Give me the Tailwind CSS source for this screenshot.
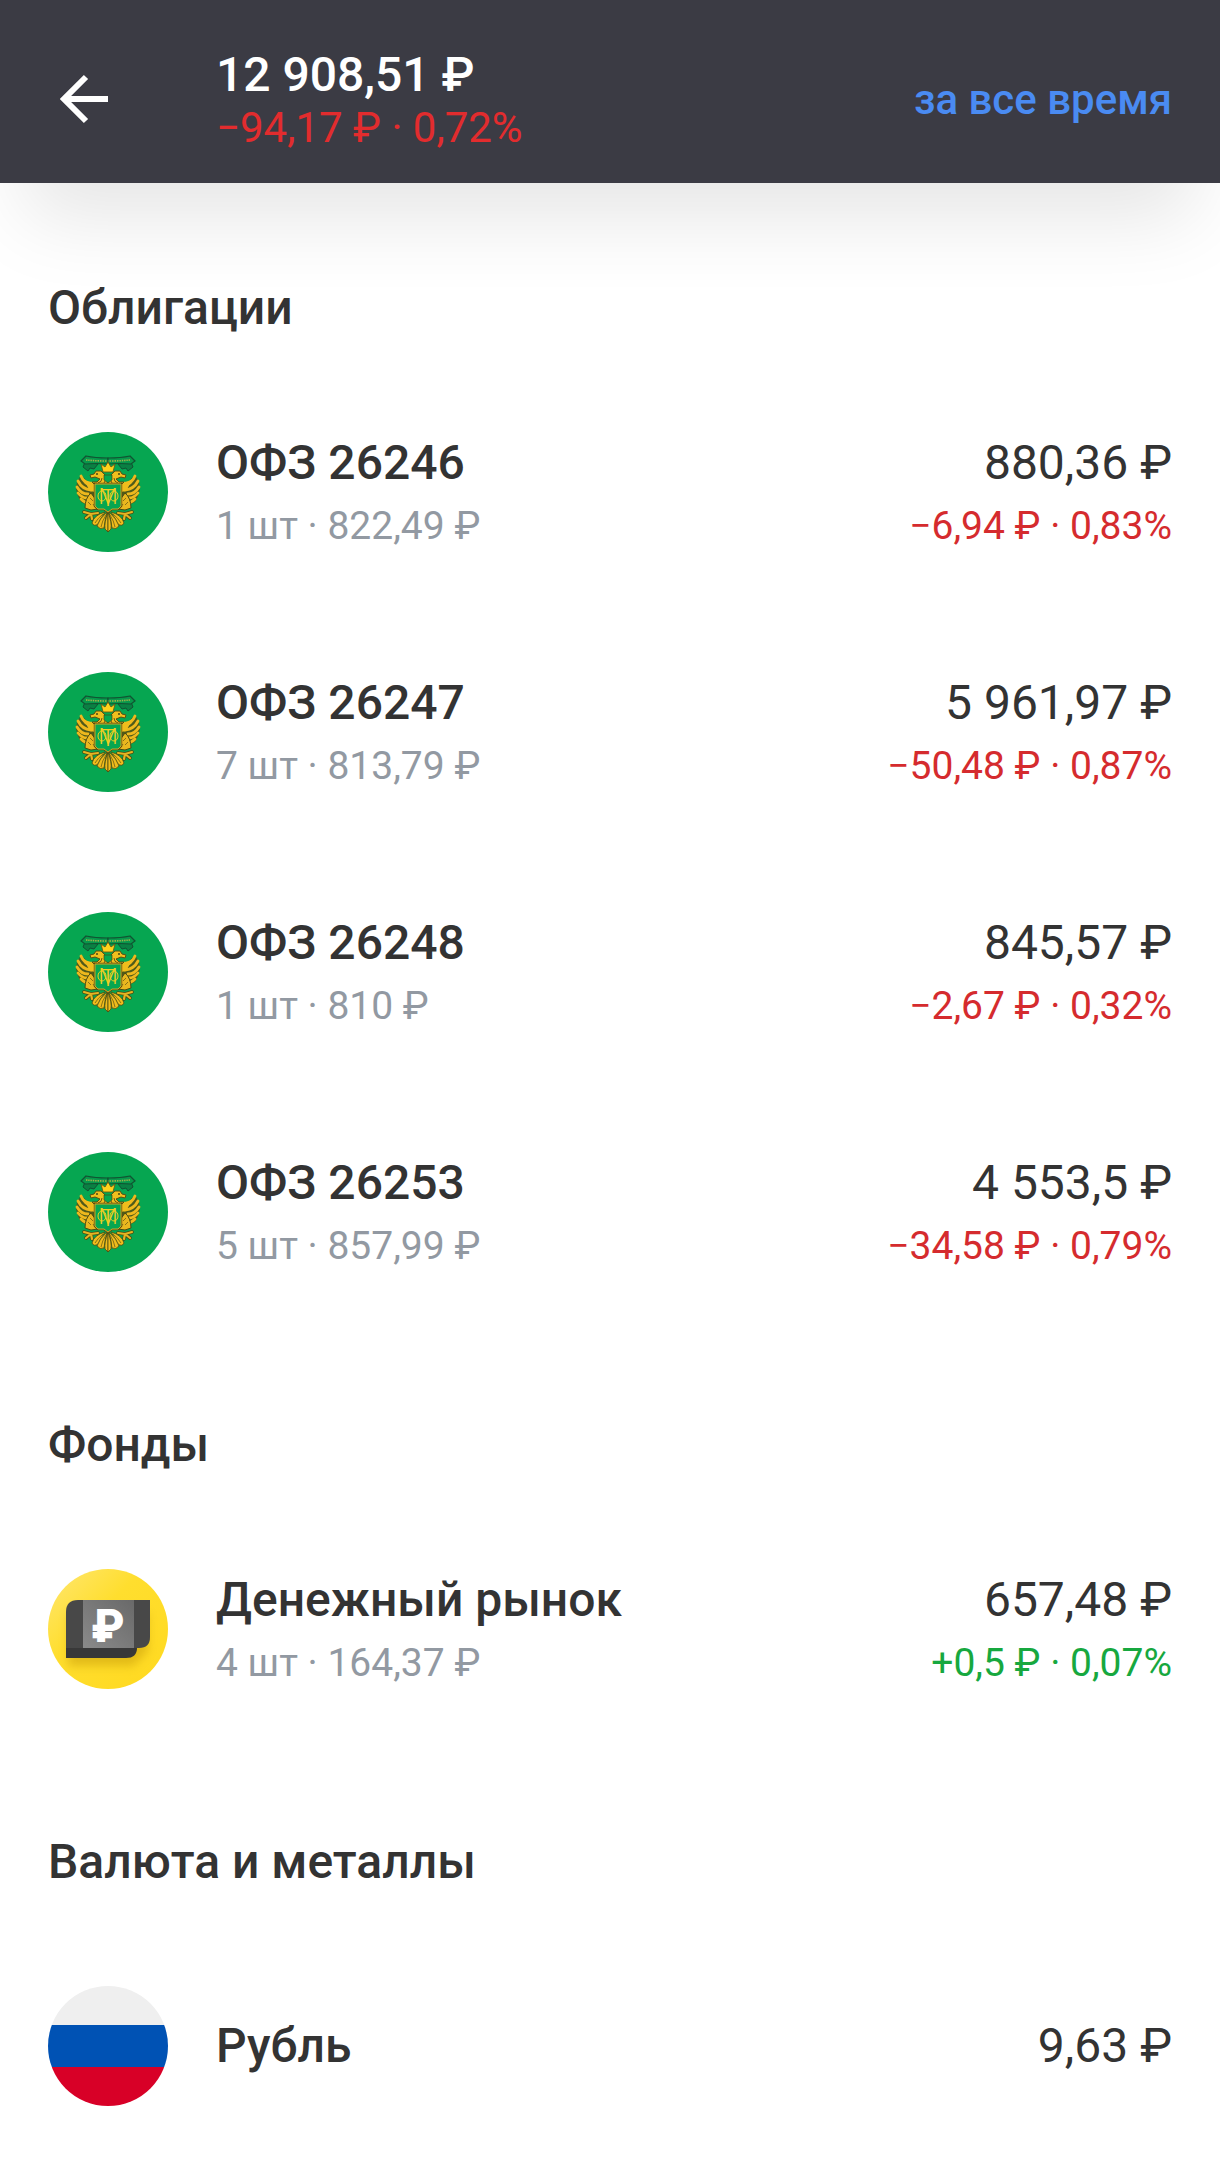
<!DOCTYPE html>
<html lang="ru">
<head>
    <meta charset="UTF-8">
    <meta name="viewport" content="width=device-width, initial-scale=1.0">
    <title>Портфель</title>
    <script src="https://cdn.jsdelivr.net/npm/@tailwindcss/browser@4"></script>
</head>
<body class="bg-white font-[Roboto,sans-serif] text-[#333333]">
    <!-- shared emblem for the government bonds -->
    <svg class="hidden" aria-hidden="true">
        <defs>
            <g id="eagle-half">
                <!-- ribbon -->
                <path d="M37 30 L35 35 L40 39 L42 36 L46 37 L50 32 Z" fill="#0a8043" stroke="#125232" stroke-width="1"/>
                <path d="M60 26 Q47 26 38 24 L33 29 L37 32 Q48 31 60 32 Z" fill="#08984b" stroke="#125232" stroke-width="1.2"/>
                <path d="M38 28 Q48 29 60 29" fill="none" stroke="#9fb14a" stroke-width="1.6" stroke-dasharray="1.5 .9"/>
                <!-- wing -->
                <path d="M33 43 L29 50 L28 57 L30 64 L33 70 L37 72 L48 74 L48 54 L40 50 Z" fill="#4f5a1a"/>
                <g fill="none" stroke="#edb91e" stroke-width="2.8" stroke-linecap="round">
                    <path d="M33 44 Q36 52 45 54"/>
                    <path d="M30 49 Q34 57 43 58"/>
                    <path d="M29 55 Q33 62 40 62"/>
                    <path d="M30 61 Q34 66 39 66"/>
                    <path d="M33 67 Q35 69 37 70"/>
                </g>
                <path d="M34 45 Q38 50 46 50 L60 53 L47 54 L47 60 L42 59 Z" fill="#f0bd1c"/>
                <!-- neck and head -->
                <path d="M60 55 L47 53 L44 50 L49 50 L52 47 L47 45 L43 46 L42 43 L46 42 L48 39 L53 39 L57 43 L60 50 Z" fill="#f2bf1d" stroke="#5a4f12" stroke-width="1"/>
                <circle cx="49" cy="42" r="1" fill="#4b4a12"/>
                <path d="M54 46 Q54 50 50 51 M57 49 L55 53" fill="none" stroke="#6b5a14" stroke-width="1"/>
                <!-- leg and claw -->
                <path d="M43 61 Q37 66 37 76 L43 78 L50 77 L48 68 Z" fill="#eab71f" stroke="#4b4a12" stroke-width="1"/>
                <path d="M42 66 L45 69 M40 70 L43 73 M45 72 L47 75" stroke="#8a7016" stroke-width="1"/>
                <path d="M50 81 L43 82 L36 80 M43 82 L38 86 M43 82 L44 87" fill="none" stroke="#4b4a12" stroke-width="3.6" stroke-linecap="round"/>
                <path d="M50 81 L43 82 L36 80 M43 82 L38 86 M43 82 L44 87" fill="none" stroke="#e6b520" stroke-width="2.2" stroke-linecap="round"/>
                <!-- tail feathers -->
                <g fill="#f0bd1c" stroke="#4b4a12" stroke-width=".8">
                    <path d="M57 80 Q46 83 44 91 Q46 95 50 92 Q53 86 57 80 Z"/>
                    <path d="M59 80 Q51 87 49 94 Q52 98 56 96 Q57 88 59 80 Z"/>
                    <path d="M60 80 Q56 91 57 97 L60 100 Z"/>
                </g>
                <path d="M55 82 Q50 86 47 91 M58 83 Q54 89 53 95" fill="none" stroke="#8a7016" stroke-width="1"/>
            </g>
            <symbol id="ofz" viewBox="0 0 120 120">
                <circle cx="60" cy="60" r="60" fill="#06a651"/>
                <use href="#eagle-half"/>
                <use href="#eagle-half" transform="translate(120 0) scale(-1 1)"/>
                <path d="M55 40 L53 32 L57 35 L60 30 L63 35 L67 32 L65 40 Z" fill="#ffd21c" stroke="#6b5a14" stroke-width=".9"/>
                <path d="M56 43 H64 V48 L60 51 L56 48 Z" fill="#06a651" stroke="#4b4a12" stroke-width=".7"/>
                <path d="M47 52 H73 V74 L70 77 L64 77 L60 80 L56 77 L50 77 L47 74 Z" fill="#06a651" stroke="#5a4f12" stroke-width="2.4"/>
                <path d="M47 52 H73 V74 L70 77 L64 77 L60 80 L56 77 L50 77 L47 74 Z" fill="#06a651" stroke="#cfa824" stroke-width="1"/>
                <g fill="#f2d01f" font-family="Roboto, sans-serif" font-weight="300" text-anchor="middle">
                    <text x="60" y="72" font-size="22">М</text>
                    <text x="60" y="74" font-size="24">Т</text>
                </g>
                <ellipse cx="54" cy="64" rx="4" ry="5" fill="none" stroke="#f2d01f" stroke-width="1"/>
                <ellipse cx="66" cy="64" rx="4" ry="5" fill="none" stroke="#f2d01f" stroke-width="1"/>
            </symbol>
        </defs>
    </svg>

    <header class="relative flex items-center bg-[#3b3b44] px-12 pt-[47px] pb-[30px] shadow-[0_60px_80px_-25px_rgba(0,0,0,0.1)]">
        <button type="button" aria-label="Назад" class="w-[168px] shrink-0 pl-2">
            <svg class="h-[56px] w-[56px]" viewBox="0 0 56 56" fill="none" stroke="#ffffff" stroke-width="6">
                <path d="M30 5 L8 27 L30 49 M8 27 H52"/>
            </svg>
        </button>
        <div class="flex-1">
            <h1 class="text-[48px] leading-[56px] font-medium text-white">12 908,51 ₽</h1>
            <p class="text-[42px] leading-[50px] text-[#e22c2e]">−94,17 ₽ · 0,72%</p>
        </div>
        <button type="button" class="text-[42px] leading-[50px] font-medium text-[#4a8bf2]">за все время</button>
    </header>

    <main class="pt-3">
        <section>
            <h2 class="px-12 pt-[85px] pb-[36px] text-[48px] leading-[56px] font-medium">Облигации</h2>
            <ul>
                <li class="flex h-[240px] items-center gap-12 px-12">
                    <svg class="h-[120px] w-[120px] shrink-0"><use href="#ofz"/></svg>
                    <div class="flex flex-1 flex-col gap-3">
                        <h3 class="text-[48px] leading-[56px] font-medium">ОФЗ 26246</h3>
                        <p class="text-[39px] leading-[47px] text-[#9299a2]">1 шт · 822,49 ₽</p>
                    </div>
                    <div class="flex flex-col gap-3 text-right">
                        <p class="text-[48px] leading-[56px]">880,36 ₽</p>
                        <p class="text-[39px] leading-[47px] text-[#d52b2e]">−6,94 ₽ · 0,83%</p>
                    </div>
                </li>
                <li class="flex h-[240px] items-center gap-12 px-12">
                    <svg class="h-[120px] w-[120px] shrink-0"><use href="#ofz"/></svg>
                    <div class="flex flex-1 flex-col gap-3">
                        <h3 class="text-[48px] leading-[56px] font-medium">ОФЗ 26247</h3>
                        <p class="text-[39px] leading-[47px] text-[#9299a2]">7 шт · 813,79 ₽</p>
                    </div>
                    <div class="flex flex-col gap-3 text-right">
                        <p class="text-[48px] leading-[56px]">5 961,97 ₽</p>
                        <p class="text-[39px] leading-[47px] text-[#d52b2e]">−50,48 ₽ · 0,87%</p>
                    </div>
                </li>
                <li class="flex h-[240px] items-center gap-12 px-12">
                    <svg class="h-[120px] w-[120px] shrink-0"><use href="#ofz"/></svg>
                    <div class="flex flex-1 flex-col gap-3">
                        <h3 class="text-[48px] leading-[56px] font-medium">ОФЗ 26248</h3>
                        <p class="text-[39px] leading-[47px] text-[#9299a2]">1 шт · 810 ₽</p>
                    </div>
                    <div class="flex flex-col gap-3 text-right">
                        <p class="text-[48px] leading-[56px]">845,57 ₽</p>
                        <p class="text-[39px] leading-[47px] text-[#d52b2e]">−2,67 ₽ · 0,32%</p>
                    </div>
                </li>
                <li class="flex h-[240px] items-center gap-12 px-12">
                    <svg class="h-[120px] w-[120px] shrink-0"><use href="#ofz"/></svg>
                    <div class="flex flex-1 flex-col gap-3">
                        <h3 class="text-[48px] leading-[56px] font-medium">ОФЗ 26253</h3>
                        <p class="text-[39px] leading-[47px] text-[#9299a2]">5 шт · 857,99 ₽</p>
                    </div>
                    <div class="flex flex-col gap-3 text-right">
                        <p class="text-[48px] leading-[56px]">4 553,5 ₽</p>
                        <p class="text-[39px] leading-[47px] text-[#d52b2e]">−34,58 ₽ · 0,79%</p>
                    </div>
                </li>
            </ul>
        </section>

        <section>
            <h2 class="px-12 pt-[85px] pb-[36px] text-[48px] leading-[56px] font-medium">Фонды</h2>
            <ul>
                <li class="flex h-[240px] items-center gap-12 px-12">
                    <svg class="h-[120px] w-[120px] shrink-0" viewBox="0 0 120 120">
                        <defs>
                            <linearGradient id="coin" x1="0" y1="0" x2="1" y2="1">
                                <stop offset="0" stop-color="#ffe773"/>
                                <stop offset=".4" stop-color="#ffde2e"/>
                                <stop offset="1" stop-color="#ffd91f"/>
                            </linearGradient>
                            <linearGradient id="band" x1="1" y1="0" x2="0" y2="1">
                                <stop offset="0" stop-color="#696969"/>
                                <stop offset="1" stop-color="#8a8a8a"/>
                            </linearGradient>
                            <filter id="soft" x="-30%" y="-30%" width="160%" height="160%">
                                <feGaussianBlur stdDeviation="5"/>
                            </filter>
                        </defs>
                        <circle cx="60" cy="60" r="60" fill="url(#coin)"/>
                        <path d="M20 44 H100 V82 L85 97 H20 Z" fill="#b88a00" opacity=".4" filter="url(#soft)"/>
                        <path d="M30 42 H89 V79 Q89 89 78 89 H18 V54 Z" fill="#383838"/>
                        <path d="M30 31 H102 V68 Q102 79 91 79 H18 V43 Q18 31 30 31 Z" fill="#484848"/>
                        <path d="M35 31 H86 V79 H35 Z" fill="url(#band)"/>
                        <text x="60" y="73" fill="#ffffff" font-family="Roboto, sans-serif" font-size="46" font-weight="900" text-anchor="middle">₽</text>
                    </svg>
                    <div class="flex flex-1 flex-col gap-3">
                        <h3 class="text-[48px] leading-[56px] font-medium">Денежный рынок</h3>
                        <p class="text-[39px] leading-[47px] text-[#9299a2]">4 шт · 164,37 ₽</p>
                    </div>
                    <div class="flex flex-col gap-3 text-right">
                        <p class="text-[48px] leading-[56px]">657,48 ₽</p>
                        <p class="text-[39px] leading-[47px] text-[#17a83f]">+0,5 ₽ · 0,07%</p>
                    </div>
                </li>
            </ul>
        </section>

        <section>
            <h2 class="px-12 pt-[85px] pb-[36px] text-[48px] leading-[56px] font-medium">Валюта и металлы</h2>
            <ul>
                <li class="flex h-[240px] items-center gap-12 px-12">
                    <div class="flex h-[120px] w-[120px] shrink-0 flex-col overflow-hidden rounded-full">
                        <div class="h-[39px] bg-[#efefef]"></div>
                        <div class="h-[42px] bg-[#0052b4]"></div>
                        <div class="h-[39px] bg-[#d80027]"></div>
                    </div>
                    <h3 class="flex-1 text-[48px] leading-[56px] font-medium">Рубль</h3>
                    <p class="text-right text-[48px] leading-[56px]">9,63 ₽</p>
                </li>
            </ul>
        </section>
    </main>
</body>
</html>
